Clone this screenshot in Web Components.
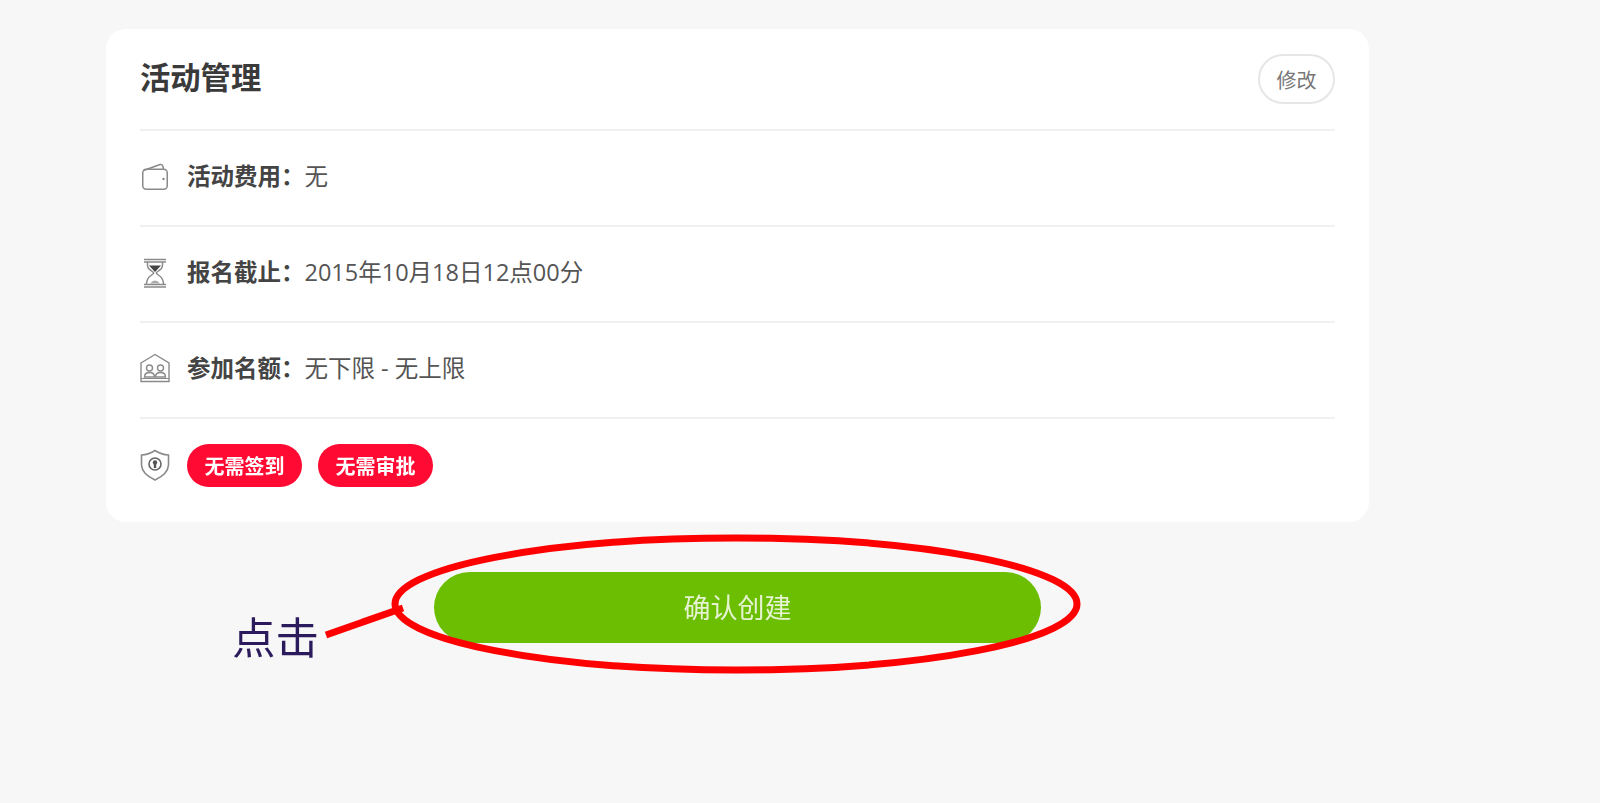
<!DOCTYPE html>
<html lang="zh">
<head>
<meta charset="utf-8">
<title>活动管理</title>
<style>
  html, body { margin: 0; height: 100%; }
  body {
    background: #f7f7f7;
    font-family: "Open Sans", "Noto Sans CJK SC", sans-serif;
    color: #4a4a4a;
    overflow: hidden;
  }
  /* the reference is an upscaled capture, so everything is a little soft */
  main { position: relative; width: 1263px; margin-left: 106px; padding-top: 29px; filter: blur(0.6px); }
</style>
</head>
<body>
<main>
  <event-card heading="活动管理" action="修改">
    <info-row label="活动费用&#xFF1A;" value="无">
      <svg slot="icon" width="30" height="30" viewBox="0 0 30 30" fill="none" stroke="#8a8a8a" stroke-width="1.5">
        <path d="M3.5 9.5 L20 3.5 Q22.5 3 23 5.5 L23.5 8.5"/>
        <rect x="2.75" y="8.25" width="24.5" height="20" rx="3.5"/>
        <circle cx="23.5" cy="18" r="1.2" fill="#8a8a8a" stroke="none"/>
      </svg>
    </info-row>
    <info-row label="报名截止&#xFF1A;" value="2015年10月18日12点00分">
      <svg slot="icon" width="30" height="32" viewBox="0 -1 30 32" fill="none" stroke="#8a8a8a" stroke-width="1.5">
        <path d="M4 2.5 H26 M4 5 H26 M4 27.5 H26 M4 30 H26" stroke-width="1.6"/>
        <path d="M7.5 5 V8 Q7.5 11.5 11 13.5 L13.5 15.5 V16.5 L11 18.5 Q6.5 21.5 6.5 27.5 M22.5 5 V8 Q22.5 11.5 19 13.5 L16.5 15.5 V16.5 L19 18.5 Q23.5 21.5 23.5 27.5"/>
        <path d="M9 8.5 H21 L15 15 Z" fill="#444" stroke="none"/>
        <path d="M10 26.5 Q15 20.5 20 26.5 Z" fill="#aaa" stroke="none"/>
      </svg>
    </info-row>
    <info-row label="参加名额&#xFF1A;" value="无下限 - 无上限">
      <svg slot="icon" width="30" height="30" viewBox="0 0 30 30" fill="none" stroke="#8a8a8a" stroke-width="1.4">
        <path d="M1 10 L15 1.5 L29 10 V28.5 H1 Z"/>
        <path d="M1 25.5 H29" stroke-width="1"/>
        <circle cx="9.5" cy="15" r="3"/>
        <circle cx="20.5" cy="15" r="3"/>
        <path d="M4.5 24 Q4.5 19.5 9.5 19.5 Q14.5 19.5 14.5 24 Z M15.5 24 Q15.5 19.5 20.5 19.5 Q25.5 19.5 25.5 24 Z"/>
      </svg>
    </info-row>
    <tag-row>
      <svg slot="icon" width="30" height="32" viewBox="0 0 30 32" fill="none" stroke="#8a8a8a" stroke-width="1.6">
        <path d="M15 1.5 Q21 5.5 28.5 6 V16 Q28 25 15 31 Q2 25 1.5 16 V6 Q9 5.5 15 1.5 Z"/>
        <circle cx="15" cy="15" r="6" stroke="#666"/>
        <circle cx="15" cy="13.5" r="2.2" fill="#555" stroke="none"/>
        <path d="M15 14 V19" stroke="#555" stroke-width="2.4"/>
      </svg>
      <red-tag>无需签到</red-tag>
      <red-tag>无需审批</red-tag>
    </tag-row>
  </event-card>
  <confirm-button>确认创建</confirm-button>
  <click-note></click-note>
</main>

<script>
class EventCard extends HTMLElement {
  constructor() {
    super();
    this.attachShadow({ mode: 'open' });
  }

  connectedCallback() {
    this.shadowRoot.innerHTML = `
      <style>
        :host {
          display: block;
          box-sizing: border-box;
          height: 493px;
          padding: 0 34px;
          background: #fff;
          border-radius: 20px;
        }
        header {
          display: flex;
          align-items: center;
          justify-content: space-between;
          height: 100px;
          box-sizing: border-box;
        }
        h2 {
          margin: 0 0 2px;
          font-size: 30.3px;
          font-weight: 700;
          line-height: 1.2;
          color: #3a3a3a;
        }
        button {
          width: 77px;
          height: 50px;
          padding: 0;
          font: inherit;
          font-size: 20px;
          color: #777;
          background: #fff;
          border: 2px solid #e6e6e6;
          border-radius: 25px;
        }
      </style>
      <header>
        <h2>${this.getAttribute('heading')}</h2>
        <button>${this.getAttribute('action')}</button>
      </header>
      <slot></slot>
    `;
  }
}

class InfoRow extends HTMLElement {
  constructor() {
    super();
    this.attachShadow({ mode: 'open' });
  }

  connectedCallback() {
    this.shadowRoot.innerHTML = `
      <style>
        :host {
          display: flex;
          align-items: center;
          box-sizing: border-box;
          height: 96px;
          padding-bottom: 7px;
          border-top: 2px solid #f1f1f1;
          font-size: 23.5px;
        }
        .icon { display: flex; justify-content: center; width: 30px; margin: 2px 17px 0 0; }
        b { color: #444; font-weight: 700; }
        span { color: #555; }
      </style>
      <div class="icon"><slot name="icon"></slot></div>
      <b>${this.getAttribute('label')}</b>
      <span>${this.getAttribute('value')}</span>
    `;
  }
}

class TagRow extends HTMLElement {
  constructor() {
    super();
    this.attachShadow({ mode: 'open' });
  }

  connectedCallback() {
    this.shadowRoot.innerHTML = `
      <style>
        :host {
          display: flex;
          align-items: center;
          box-sizing: border-box;
          padding-top: 25px;
          border-top: 2px solid #f1f1f1;
        }
        .icon { display: flex; justify-content: center; width: 30px; margin: 0 17px 2px 0; }
        .tags { display: flex; gap: 16px; }
      </style>
      <div class="icon"><slot name="icon"></slot></div>
      <div class="tags"><slot></slot></div>
    `;
  }
}

class RedTag extends HTMLElement {
  constructor() {
    super();
    this.attachShadow({ mode: 'open' });
    this.shadowRoot.innerHTML = `
      <style>
        :host {
          display: flex;
          align-items: center;
          justify-content: center;
          width: 115px;
          height: 43px;
          border-radius: 22px;
          background: #ff0a32;
          color: #fff;
          font-size: 20px;
          font-weight: 700;
        }
      </style>
      <slot></slot>
    `;
  }
}

class ConfirmButton extends HTMLElement {
  constructor() {
    super();
    this.attachShadow({ mode: 'open' });
    this.shadowRoot.innerHTML = `
      <style>
        :host {
          display: flex;
          align-items: center;
          justify-content: center;
          box-sizing: border-box;
          width: 607px;
          height: 71px;
          margin: 50px auto 0;
          padding-bottom: 2px;
          border-radius: 36px;
          background: #6bbe02;
          color: #e6f3d2;
          font-size: 27px;
        }
      </style>
      <slot></slot>
    `;
  }
}

/* red hand-drawn marking over the button, coordinates are relative to <main> */
class ClickNote extends HTMLElement {
  constructor() {
    super();
    this.attachShadow({ mode: 'open' });
    this.shadowRoot.innerHTML = `
      <style>
        :host { position: absolute; left: 0; top: 0; width: 1263px; height: 760px; pointer-events: none; }
        svg { position: absolute; left: 0; top: 0; }
        span {
          position: absolute;
          left: 126px;
          top: 608px;
          font-size: 43.5px;
          line-height: 60px;
          color: #2b1a5c;
        }
      </style>
      <svg width="1263" height="760" fill="none" stroke="#ff0000" stroke-width="7">
        <ellipse cx="630" cy="604" rx="341" ry="66"/>
        <path d="M220 635 L297 608"/>
      </svg>
      <span>点击</span>
    `;
  }
}

customElements.define('event-card', EventCard);
customElements.define('info-row', InfoRow);
customElements.define('tag-row', TagRow);
customElements.define('red-tag', RedTag);
customElements.define('confirm-button', ConfirmButton);
customElements.define('click-note', ClickNote);
</script>
</body>
</html>
